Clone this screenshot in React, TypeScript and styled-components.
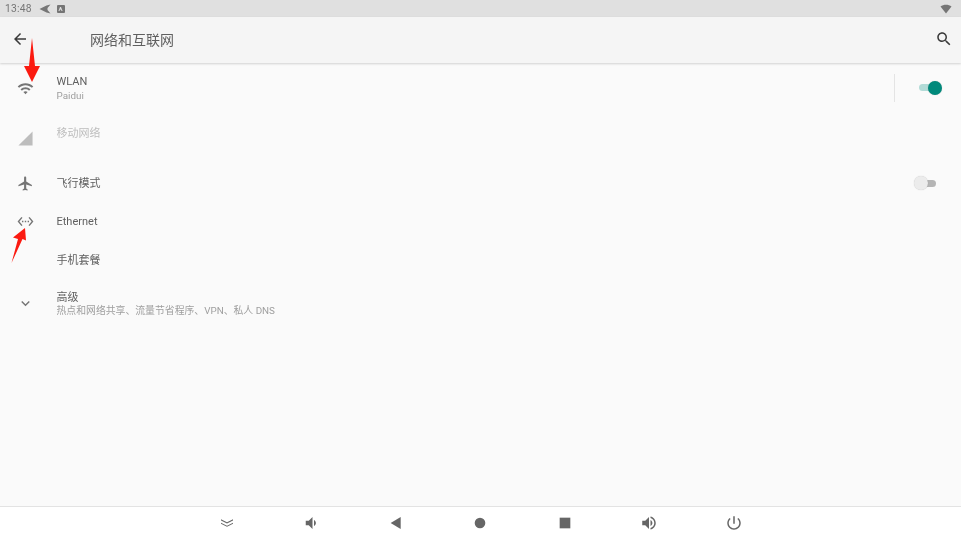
import React from 'react'
import styled, { createGlobalStyle } from 'styled-components'

const GlobalStyle = createGlobalStyle`
    html, body {
        margin: 0;
        padding: 0;
        width: 961px;
        height: 540px;
        overflow: hidden;
        background: #fafafa;
        font-family: Roboto, "Noto Sans CJK SC", sans-serif;
    }
`

const paths = {
    back: 'M20 11H7.83l5.59-5.59L12 4l-8 8 8 8 1.41-1.41L7.83 13H20v-2z',
    search: 'M15.5 14h-.79l-.28-.27C15.41 12.59 16 11.11 16 9.5 16 5.91 13.09 3 9.5 3S3 5.91 3 9.5 5.91 16 9.5 16c1.61 0 3.09-.59 4.23-1.57l.27.28v.79l5 4.99L20.49 19l-4.99-5zm-6 0C7.01 14 5 11.99 5 9.5S7.01 5 9.5 5 14 7.01 14 9.5 11.99 14 9.5 14z',
    wifi: 'M1 9l2 2c4.97-4.97 13.03-4.97 18 0l2-2C16.93 2.93 7.08 2.93 1 9zm8 8l3 3 3-3c-1.65-1.66-4.34-1.66-6 0zm-4-4l2 2c2.76-2.76 7.24-2.76 10 0l2-2C15.14 9.14 8.87 9.14 5 13z',
    signal: 'M2 22h20V2z',
    plane: 'M21 16v-2l-8-5V3.5c0-.83-.67-1.5-1.5-1.5S10 2.67 10 3.5V9l-8 5v2l8-2.5V19l-2 1.5V22l3.5-1 3.5 1v-1.5L13 19v-5.5l8 2.5z',
    ethernet: 'M7.77 6.76L6.23 5.48.82 12l5.41 6.52 1.54-1.28L3.42 12l4.35-5.24zM7 13h2v-2H7v2zm10-2h-2v2h2v-2zm-6 2h2v-2h-2v2zm6.77-7.52l-1.54 1.28L20.58 12l-4.35 5.24 1.54 1.28L23.18 12l-5.41-6.52z',
    chevron: 'M16.59 8.59L12 13.17 7.41 8.59 6 10l6 6 6-6z',
    hide: 'M3 6.5l9 4.5 9-4.5v1.8l-9 4.5-9-4.5zM3 11.5l9 4.5 9-4.5v1.8l-9 4.5-9-4.5z',
    volDown: 'M18.5 12c0-1.77-1.02-3.29-2.5-4.03v8.05c1.48-.73 2.5-2.25 2.5-4.02zM5 9v6h4l5 5V4L9 9H5z',
    volUp: 'M3 9v6h4l5 5V4L7 9H3zm13.5 3c0-1.77-1.02-3.29-2.5-4.03v8.05c1.48-.73 2.5-2.25 2.5-4.02zM14 3.23v2.06c2.89.86 5 3.54 5 6.71s-2.11 5.85-5 6.71v2.06c4.01-.91 7-4.49 7-8.77s-2.99-7.86-7-8.77z',
    power: 'M13 3h-2v10h2V3zm4.83 2.17l-1.42 1.42C17.99 7.86 19 9.81 19 12c0 3.87-3.13 7-7 7s-7-3.13-7-7c0-2.19 1.01-4.14 2.58-5.42L6.17 5.17C4.23 6.82 3 9.26 3 12c0 4.97 4.03 9 9 9s9-4.03 9-9c0-2.74-1.23-5.18-3.17-6.83z',
    triangle: 'M19 3v18L4 12z',
    dot: 'M12 4a8 8 0 1 0 0 16a8 8 0 0 0 0-16z',
    square: 'M4 4h16v16H4z',
    send: 'M1 12L15 5L23 3L17 10L17 14L23 21L15 19z',
    statusWifi: 'M1 7c6-5 16-5 22 0L12 21z',
}

const Icon = ({ d, size = 24, color = '#757575' }: { d: string; size?: number; color?: string }) => (
    <svg width={size} height={size} viewBox="0 0 24 24" fill={color} style={{ flex: 'none' }}>
        <path d={d} />
    </svg>
)

const Screen = styled.div`
    position: relative;
    width: 961px;
    height: 540px;
    display: flex;
    flex-direction: column;
    background: #fafafa;
    overflow: hidden;
    filter: blur(0.3px);
`

const StatusBar = styled.div`
    height: 17px;
    flex: none;
    display: flex;
    align-items: center;
    padding: 0 9px 0 5px;
    background: #e0e0e0;
    color: #757575;
    font-size: 10.3px;
    letter-spacing: 0.2px;
`

const StatusIcons = styled.div`
    display: flex;
    align-items: center;
    gap: 6px;
    margin-left: 7px;
    flex: 1;
`

const BadgeA = styled.span`
    width: 8px;
    height: 8px;
    border-radius: 1px;
    background: #757575;
    color: #e0e0e0;
    font-size: 6px;
    font-weight: 700;
    line-height: 8px;
    text-align: center;
`

const Toolbar = styled.div`
    height: 46px;
    box-sizing: border-box;
    padding: 0 8px 2px 11px;
    flex: none;
    display: flex;
    align-items: center;
    background: #f5f5f5;
    box-shadow: 0 1px 2px rgba(0, 0, 0, 0.16);
`

const Title = styled.div`
    margin-left: 61px;
    flex: 1;
    font-size: 14px;
    color: #5f5f5f;
`

const List = styled.div`
    flex: 1;
    display: flex;
    flex-direction: column;
`

const Row = styled.div<{ $height: number }>`
    height: ${(p) => p.$height}px;
    flex: none;
    display: flex;
    align-items: center;
    padding-right: 25px;
`

const IconSlot = styled.div`
    width: 56.5px;
    padding-left: 17px;
    box-sizing: border-box;
    flex: none;
    display: flex;
    align-items: center;
`

const RowText = styled.div<{ $lift?: number; $gap?: number }>`
    flex: 1;
    display: flex;
    flex-direction: column;
    gap: ${(p) => (p.$gap === undefined ? 1 : p.$gap)}px;
    margin-top: ${(p) => -(p.$lift || 0)}px;
`

const RowTitle = styled.div<{ $disabled?: boolean }>`
    font-size: 11px;
    line-height: 14px;
    color: ${(p) => (p.$disabled ? '#bdbdbd' : '#5f5f5f')};
`

const RowSummary = styled.div`
    font-size: 9.85px;
    line-height: 12px;
    color: #9e9e9e;
`

const VDivider = styled.div`
    width: 1px;
    height: 28px;
    background: #e4e4e4;
    margin-right: 24px;
`

const SwitchTrack = styled.div<{ $on?: boolean }>`
    position: relative;
    width: 17px;
    height: 7px;
    border-radius: 4px;
    background: ${(p) => (p.$on ? '#b2dbd7' : '#b5b5b5')};
    margin-top: ${(p) => (p.$on ? '-1px' : '0')};
`

const SwitchThumb = styled.div<{ $on?: boolean }>`
    position: absolute;
    top: -3.5px;
    ${(p) => (p.$on ? 'right: -6px;' : 'left: -5px;')}
    width: 14px;
    height: 14px;
    border-radius: 50%;
    background: ${(p) => (p.$on ? '#00897b' : '#ececec')};
    box-shadow: 0 0 1px rgba(0, 0, 0, 0.25);
`

const NavBar = styled.div`
    height: 34px;
    box-sizing: border-box;
    padding: 0 1px 1px 0;
    flex: none;
    display: flex;
    align-items: center;
    justify-content: center;
    gap: 68.5px;
    background: #ffffff;
    border-top: 1px solid #e3e3e3;
`

const NavSlot = styled.div`
    width: 16px;
    display: flex;
    align-items: center;
    justify-content: center;
`

const Arrow = styled.svg<{ $left: number; $top: number }>`
    position: absolute;
    left: ${(p) => p.$left}px;
    top: ${(p) => p.$top}px;
`

const App = () => {
    return (
        <Screen>
            <GlobalStyle />
            <StatusBar>
                13:48
                <StatusIcons>
                    <Icon d={paths.send} size={12} />
                    <BadgeA>A</BadgeA>
                </StatusIcons>
                <Icon d={paths.statusWifi} size={12} />
            </StatusBar>
            <Toolbar>
                <Icon d={paths.back} size={18} color="#3a3a3a" />
                <Title>网络和互联网</Title>
                <Icon d={paths.search} size={18} color="#3a3a3a" />
            </Toolbar>
            <List>
                <Row $height={50}>
                    <IconSlot><Icon d={paths.wifi} size={17} /></IconSlot>
                    <RowText>
                        <RowTitle>WLAN</RowTitle>
                        <RowSummary>Paidui</RowSummary>
                    </RowText>
                    <VDivider />
                    <SwitchTrack $on><SwitchThumb $on /></SwitchTrack>
                </Row>
                <Row $height={51}>
                    <IconSlot><Icon d={paths.signal} size={17} color="#bdbdbd" /></IconSlot>
                    <RowText $lift={10}>
                        <RowTitle $disabled>移动网络</RowTitle>
                    </RowText>
                </Row>
                <Row $height={38}>
                    <IconSlot><Icon d={paths.plane} size={17} /></IconSlot>
                    <RowText $lift={-2}>
                        <RowTitle>飞行模式</RowTitle>
                    </RowText>
                    <SwitchTrack><SwitchThumb /></SwitchTrack>
                </Row>
                <Row $height={38}>
                    <IconSlot><Icon d={paths.ethernet} size={17} /></IconSlot>
                    <RowText $lift={-2}>
                        <RowTitle>Ethernet</RowTitle>
                    </RowText>
                </Row>
                <Row $height={38}>
                    <IconSlot />
                    <RowText $lift={-4}>
                        <RowTitle>手机套餐</RowTitle>
                    </RowText>
                </Row>
                <Row $height={50}>
                    <IconSlot><Icon d={paths.chevron} size={17} /></IconSlot>
                    <RowText $lift={-1} $gap={0}>
                        <RowTitle>高级</RowTitle>
                        <RowSummary>热点和网络共享、流量节省程序、VPN、私人 DNS</RowSummary>
                    </RowText>
                </Row>
            </List>
            <NavBar>
                <NavSlot><Icon d={paths.hide} size={16} color="#666666" /></NavSlot>
                <NavSlot><Icon d={paths.volDown} size={18} color="#666666" /></NavSlot>
                <NavSlot><Icon d={paths.triangle} size={16} color="#666666" /></NavSlot>
                <NavSlot><Icon d={paths.dot} size={16} color="#666666" /></NavSlot>
                <NavSlot><Icon d={paths.square} size={16} color="#666666" /></NavSlot>
                <NavSlot><Icon d={paths.volUp} size={18} color="#666666" /></NavSlot>
                <NavSlot><Icon d={paths.power} size={18} color="#666666" /></NavSlot>
            </NavBar>
            {/* red markup arrows drawn over the screenshot */}
            <Arrow $left={24} $top={38} width={16} height={45} viewBox="0 0 16 45">
                <path d="M8 0L11 28L16 28L8 44L0 28L5 28z" fill="#fb1a10" />
            </Arrow>
            <Arrow $left={10} $top={226} width={17} height={38} viewBox="0 0 17 38">
                <path d="M1.5 37L8 13L3 11.5L15 2L16 14.5L12.5 13z" fill="#fb1a10" />
            </Arrow>
        </Screen>
    )
}

export default App
